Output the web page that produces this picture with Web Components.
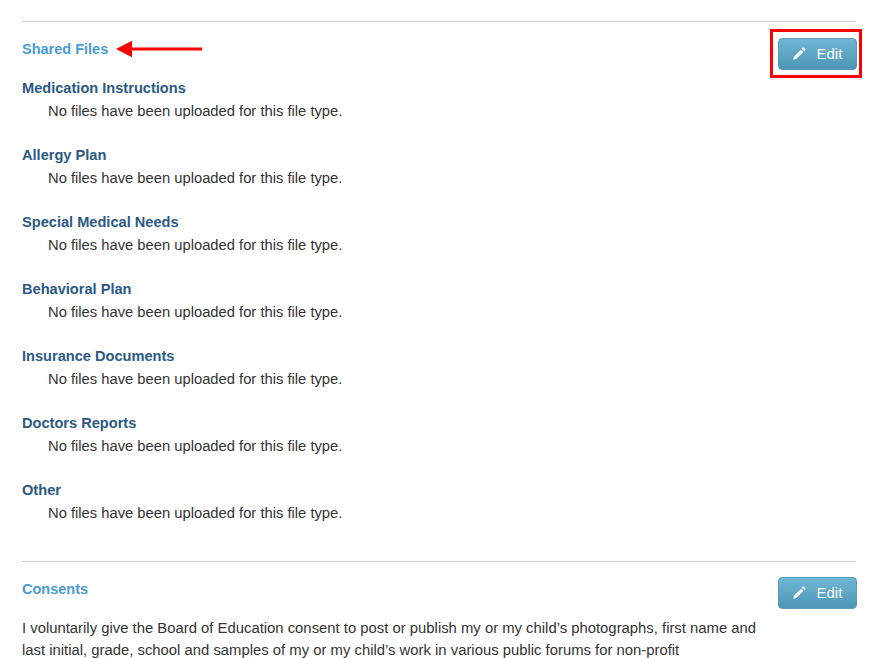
<!DOCTYPE html>
<html>
<head>
<meta charset="utf-8">
<style>
  html, body { margin: 0; background: #fff; overflow: hidden; height: 658px; }
  body {
    padding: 21px 36px 0 22px;
    font-family: "Liberation Sans", Arial, sans-serif;
    font-size: 14.75px;
    color: #333;
  }
</style>
</head>
<body>
<template id="edit-button-tpl">
  <style>
    :host { display: block; position: relative; width: 79px; height: 31.500px; margin-right: -0.500px; }
    button {
      display: flex; align-items: center; width: 100%; height: 100%;
      padding: 0 0 0 13px; border: 1px solid #5a9db8; border-radius: 4px;
      background: linear-gradient(#6fb7d4, #4c95b4);
      color: #fff; font: 15px "Liberation Sans", Arial, sans-serif;
      box-sizing: border-box;
    }
    svg { width: 15px; height: 15px; margin-right: 10px; flex: none; opacity: .92; }
    .mark {
      position: absolute; left: -8px; top: -9px; width: 92px; height: 49px;
      border: 3px solid #f00; box-sizing: border-box; display: none;
    }
    :host([marked]) .mark { display: block; }
  </style>
  <button>
    <svg viewBox="0 0 15 15"><path fill="#fff" d="M1.200 13.800l.7-3.100 7-7 2.400 2.400-7 7zM9.700 2.700l.9-.9c.5-.5 1.100-.5 1.600 0l1 1c.5.5.5 1.100 0 1.600l-.9.9z"/></svg>
    <span>Edit</span>
  </button>
  <div class="mark"></div>
</template>

<template id="profile-section-tpl">
  <style>
    :host { display: block; border-top: 1px solid #ccc; position: relative; }
    header { display: flex; justify-content: space-between; align-items: flex-start; padding-top: var(--pad, 15px); }
    h2 { margin: var(--title-top, 3px) 0 0; font-size: 14.5px; line-height: 18px; font-weight: bold; color: #4a9bd6; }
    .title { display: flex; align-items: flex-start; }
  </style>
  <header>
    <div class="title">
      <h2><slot name="title"></slot></h2>
      <slot name="note"></slot>
    </div>
    <slot name="action"></slot>
  </header>
  <slot></slot>
</template>

<template id="file-type-tpl">
  <style>
    :host { display: block; height: 67px; }
    h3 { margin: 0; font-size: 14.6px; line-height: 18px; font-weight: bold; color: #2a5a85; }
    p { margin: 5px 0 0 26px; font-size: 14.75px; line-height: 18px; color: #333; }
  </style>
  <h3><slot></slot></h3>
  <p>No files have been uploaded for this file type.</p>
</template>

<template id="red-arrow-tpl">
  <style>
    :host { display: block; width: 86px; height: 18px; margin: 2px 0 0 8px; }
    svg { display: block; }
  </style>
  <svg width="86" height="18" viewBox="0 0 86 18"><path fill="#f00" d="M0 9l16-8.300v6.700h70v3.200h-70v6.700z"/></svg>
</template>

<template id="page-text-tpl">
  <style>
    :host { display: block; margin-top: 8px; font-size: 14.85px; line-height: 22px; color: #333; width: 750px; }
  </style>
  <slot></slot>
</template>

<profile-section style="height:539px; --pad:16px; --title-top:2px">
  <span slot="title">Shared Files</span>
  <red-arrow slot="note"></red-arrow>
  <edit-button slot="action" marked></edit-button>
  <div style="margin-top:9px"></div>
  <file-type>Medication Instructions</file-type>
  <file-type>Allergy Plan</file-type>
  <file-type>Special Medical Needs</file-type>
  <file-type>Behavioral Plan</file-type>
  <file-type>Insurance Documents</file-type>
  <file-type>Doctors Reports</file-type>
  <file-type>Other</file-type>
</profile-section>
<profile-section>
  <span slot="title">Consents</span>
  <edit-button slot="action"></edit-button>
  <page-text>I voluntarily give the Board of Education consent to post or publish my or my child’s photographs, first name and last initial, grade, school and samples of my or my child’s work in various public forums for non-profit</page-text>
</profile-section>

<script>
  function register(name, tplId) {
    customElements.define(name, class extends HTMLElement {
      constructor() {
        super();
        this.attachShadow({ mode: "open" });
        this.shadowRoot.appendChild(document.getElementById(tplId).content.cloneNode(true));
      }
    });
  }
  register("edit-button", "edit-button-tpl");
  register("profile-section", "profile-section-tpl");
  register("file-type", "file-type-tpl");
  register("red-arrow", "red-arrow-tpl");
  register("page-text", "page-text-tpl");
</script>
</body>
</html>
